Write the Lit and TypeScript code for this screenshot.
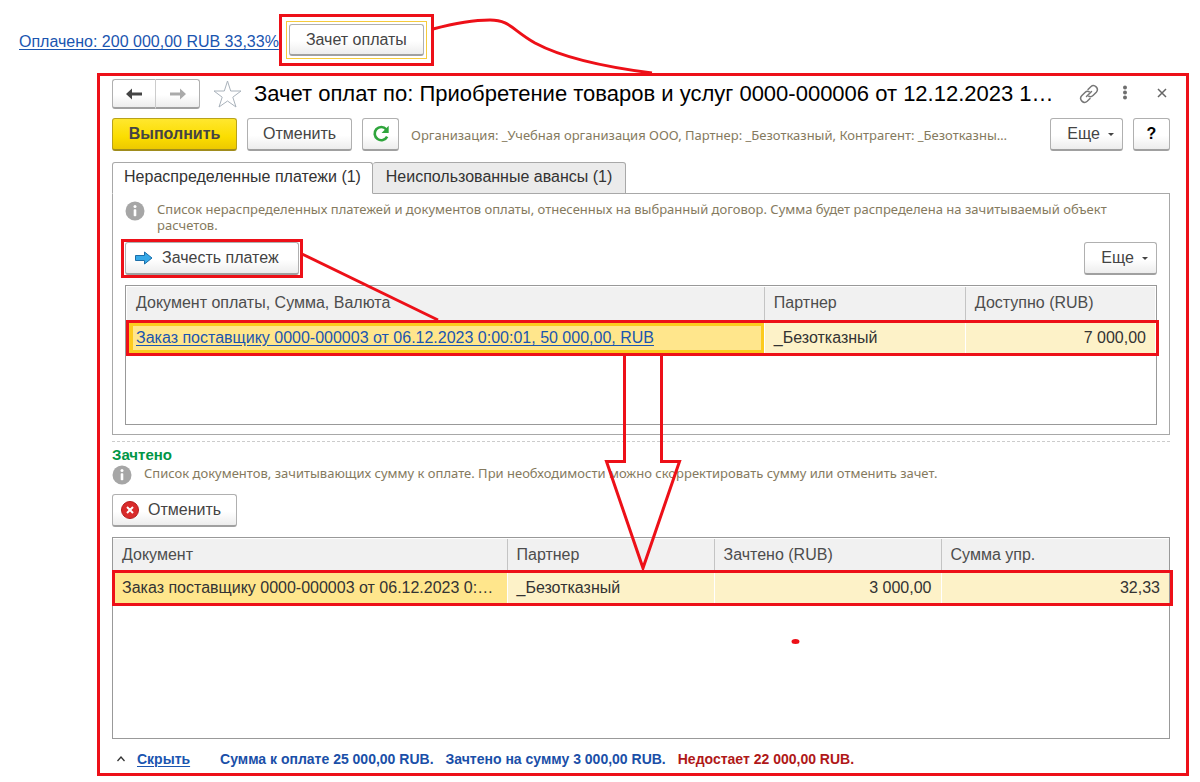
import { LitElement, html, svg, css } from "lit";
import { customElement, state } from "lit/decorators.js";
import { classMap } from "lit/directives/class-map.js";

const infoIcon = html`<svg class="info" viewBox="0 0 20 20" aria-hidden="true">
  <circle cx="10" cy="10" r="9.5" fill="#a6a6a6" />
  <circle cx="10" cy="5.6" r="1.5" fill="#fff" />
  <rect x="8.7" y="8.2" width="2.6" height="7" rx="0.8" fill="#fff" />
</svg>`;

const arrow = (color: string, flip: boolean) => svg`<path
  d=${flip ? "M17 6 L11 0.500 V4.500 H1 V7.500 H11 V11.500 Z" : "M1 6 L7 0.500 V4.500 H17 V7.500 H7 V11.500 Z"}
  fill=${color} />`;

@customElement("app-root")
export class AppRoot extends LitElement {
  @state() private tab = 0;

  static styles = css`
    :host {
      display: block;
      position: relative;
      background: #fff;
      color: #333;
      font: 16px/20px "Liberation Sans", Arial, sans-serif;
      padding: 14px 11px 6px 19px;
      --red: #ed1018;
      --line: #a8a8a8;
    }
    * { box-sizing: border-box; }
    a { color: #1a55b0; text-underline-offset: 2px; }
    button {
      font: inherit;
      color: #444;
      height: 33px;
      padding: 0 16px;
      border: 1px solid #b0b0b0;
      border-bottom: 2px solid #a0a0a0;
      border-radius: 3px;
      background: linear-gradient(#fff 55%, #ededed);
      display: inline-flex;
      align-items: center;
      justify-content: center;
      white-space: nowrap;
      flex: none;
    }
    .paid { display: flex; align-items: center; height: 52px; }
    .paid a { padding-top: 4px; }
    .frame { border: 3px solid var(--red); display: flex; }
    .frame.pay { padding: 4px; }
    .focus { border: 1px solid #f6cb3c; padding: 2px; display: flex; }
    .focus button { width: 135px; height: 32px; }
    .window {
      margin: 7px 0 0 78px;
      border: 3px solid var(--red);
      padding: 3px 16px 4px 12px;
    }
    .title { display: flex; align-items: center; height: 30px; }
    .nav { display: flex; }
    .nav button { height: 30px; width: 44px; padding: 0; }
    .nav .back { border-radius: 3px 0 0 3px; border-right: 1px solid #ccc; }
    .nav .next { border-radius: 0 3px 3px 0; border-left: 0; }
    .nav svg { width: 18px; height: 12px; }
    .star { width: 30px; height: 30px; margin: 0 12px; flex: none; }
    h1 {
      font-size: 22px;
      line-height: 30px;
      font-weight: 400;
      margin: 0;
      color: #000;
      flex: 1;
      min-width: 0;
      white-space: nowrap;
      overflow: hidden;
      text-overflow: ellipsis;
    }
    .tools { display: flex; flex: none; align-items: center; }
    .tools button { border: 0; background: none; padding: 0; height: 24px; width: 36px; }
    .tools button:last-child { width: 38px; margin-right: -11px; }
    .tools svg { width: 22px; height: 22px; }
    .commands { display: flex; align-items: center; gap: 10px; margin-top: 9px; }
    .primary {
      width: 125px;
      font-weight: 700;
      background: linear-gradient(#ffe72e, #fbdd00 60%, #ecc900);
      border-color: #b8a21a;
      border-bottom-color: #a08c1c;
    }
    .cancel { width: 105px; }
    .square { width: 37px; padding: 0; }
    .more { width: 73px; gap: 8px; padding: 0 4px 0 12px; }
    .more::after {
      content: "";
      border: 3px solid transparent;
      border-top-color: #444;
      border-bottom: 0;
    }
    .help { color: #000; font-weight: 700; }
    .note { font: 13px/16px "Noto Sans", sans-serif; color: #857a5e; margin: 0; }
    .commands .note { flex: 1; min-width: 0; white-space: nowrap; overflow: hidden; margin-left: 2px; }
    .tabs { display: flex; margin-top: 11px; }
    .tabs button {
      height: 32px;
      padding: 0 11px 2px;
      color: #333;
      background: #ebebeb;
      border: 1px solid var(--line);
      border-radius: 3px 3px 0 0;
      width: 253px;
    }
    .tabs button + button { border-left: 0; }
    .tabs .wide { width: 261px; }
    .tabs .active { background: #fff; border-bottom-color: #fff; }
    .panel { border: 1px solid var(--line); margin-top: -1px; padding: 7px 12px 9px; }
    .hint { display: flex; }
    .hint .info { margin-right: 12px; }
    .info { width: 20px; height: 20px; flex: none; }
    .bar { display: flex; justify-content: space-between; align-items: center; margin: 6px 0 7px -4px; }
    .bar .frame { padding: 0 1px; }
    .bar .apply { width: 174px; gap: 8px; padding: 0 8px; justify-content: flex-start; }
    .apply svg { width: 20px; height: 16px; }
    .grid { border: 1px solid #999; padding: 1px; min-height: 140px; }
    .grid.tall { min-height: 202px; padding: 1px 0; }
    table { width: 100%; border-collapse: collapse; table-layout: fixed; }
    th, td { padding: 0 9px; font-weight: 400; text-align: left; white-space: nowrap; overflow: hidden; text-overflow: ellipsis; }
    th { height: 33px; padding-bottom: 2px; background: #f1f1f1; color: #4d4d4d; }
    .tall th { height: 31px; padding-bottom: 0; }
    th + th { border-left: 1px solid #c4c4c4; }
    td { height: 36px; background: #fdf2c8; color: #333; }
    td + td { border-left: 1px solid #fff; }
    td.num { text-align: right; }
    td.current { background: #ffe68c; }
    td.focused { box-shadow: inset 0 0 0 6px #fccb1e; background: #ffe68c; padding: 0; }
    td.focused a { display: block; margin: 6px 3px 6px 6px; line-height: 24px; padding-left: 3px; background: #ffe68c; }
    .marked { position: relative; }
    .marked td:last-child::after { content: ""; position: absolute; inset: 0 -4px 0 -1px; border: 3px solid var(--red); pointer-events: none; }
    .c-doc { width: 62%; }
    .c-partner { width: 201px; }
    .c-doc2 { width: 394px; }
    .c-partner2 { width: 207px; }
    .c-sum { width: 227px; }
    .done { border-top: 1px dashed #ccc; margin-top: 6px; padding-top: 3px; }
    h2 { font: 700 15px/20px "Liberation Sans", sans-serif; color: #009646; margin: 0; }
    .undo { width: 125px; gap: 8px; padding: 0 7px; margin: 9px 0 10px; justify-content: flex-start; }
    .undo svg { width: 20px; height: 20px; }
    footer { display: flex; align-items: center; gap: 12px; font-weight: 700; font-size: 14px; line-height: 20px; padding: 10px 5px 0; color: #1a4fa8; }
    footer .fold { width: 8px; height: 6px; }
    footer .hide { margin-right: 18px; }
    footer .lack { color: #b01818; }
    .marks { position: absolute; left: 0; top: 0; width: 1200px; height: 782px; pointer-events: none; fill: none; stroke: var(--red); stroke-width: 3px; }
  `;

  render() {
    return html`
      <div class="paid">
        <a href="#paid">Оплачено: 200 000,00 RUB 33,33%</a>
        <div class="frame pay"><div class="focus"><button>Зачет оплаты</button></div></div>
      </div>
      <main class="window">
        <div class="title">
          <div class="nav">
            <button class="back" aria-label="Назад"><svg viewBox="0 0 18 12">${arrow("#444", false)}</svg></button>
            <button class="next" aria-label="Вперед"><svg viewBox="0 0 18 12">${arrow("#aaa", true)}</svg></button>
          </div>
          <svg class="star" viewBox="0 0 30 30" aria-hidden="true">
            <path d="M15.500 2 L18.700 12 H29 L20.800 18.200 L24 28 L15.500 22 L7 28 L10.200 18.200 L2 12 H12.300 Z" fill="#fff" stroke="#a9b2bb" stroke-width="1" />
          </svg>
          <h1>Зачет оплат по: Приобретение товаров и услуг 0000-000006 от 12.12.2023 1…</h1>
          <div class="tools">
            <button aria-label="Ссылка"><svg viewBox="0 0 22 22" fill="none" stroke="#777" stroke-width="1.5" stroke-linecap="round">
              <path d="M10 6.500 L12.800 3.700 A3.900 3.900 0 0 1 18.300 9.200 L15 12.500 A3.900 3.900 0 0 1 10.800 13.300" />
              <path d="M12 15.500 L9.200 18.300 A3.900 3.900 0 0 1 3.700 12.800 L7 9.500 A3.900 3.900 0 0 1 11.200 8.700" />
              <path d="M8.500 13.500 L13.500 8.500" />
            </svg></button>
            <button aria-label="Меню"><svg viewBox="0 0 22 22" fill="#6e6e6e"><circle cx="11" cy="4.500" r="2" /><circle cx="11" cy="9.500" r="2" /><circle cx="11" cy="14.500" r="2" /></svg></button>
            <button aria-label="Закрыть"><svg viewBox="0 0 22 22" stroke="#666" stroke-width="1.5"><path d="M7 6 L15 14 M15 6 L7 14" /></svg></button>
          </div>
        </div>
        <div class="commands">
          <button class="primary">Выполнить</button>
          <button class="cancel">Отменить</button>
          <button class="square" aria-label="Обновить"><svg width="22" height="22" viewBox="0 0 20 20" fill="none">
            <path d="M14.800 5.700 A6 6 0 1 0 15.600 12.400" stroke="#2fa53c" stroke-width="2.400" />
            <path d="M17 2.500 V9 H10.500 Z" fill="#2fa53c" />
          </svg></button>
          <p class="note">Организация: _Учебная организация ООО, Партнер: _Безотказный, Контрагент: _Безотказны…</p>
          <button class="more">Еще</button>
          <button class="square help">?</button>
        </div>
        <div class="tabs" role="tablist">
          ${["Нераспределенные платежи (1)", "Неиспользованные авансы (1)"].map(
            (label, i) => html`<button role="tab" class=${classMap({ active: this.tab === i, wide: i === 0 })}
              aria-selected=${this.tab === i} @click=${() => (this.tab = i)}>${label}</button>`
          )}
        </div>
        <section class="panel">
          <div class="hint">${infoIcon}
            <p class="note">Список нераспределенных платежей и документов оплаты, отнесенных на выбранный договор. Сумма будет распределена на зачитываемый объект расчетов.</p>
          </div>
          <div class="bar">
            <div class="frame"><button class="apply"><svg viewBox="0 0 20 16"><path d="M1.500 5.500 H10.500 V2 L18 8 L10.500 14 V10.500 H1.500 Z" fill="#36a9e8" stroke="#1c6ea8" /></svg>Зачесть платеж</button></div>
            <button class="more">Еще</button>
          </div>
          <div class="grid">
            <table>
              <colgroup><col class="c-doc" /><col class="c-partner" /><col /></colgroup>
              <thead><tr><th>Документ оплаты, Сумма, Валюта</th><th>Партнер</th><th>Доступно (RUB)</th></tr></thead>
              <tbody><tr class="marked">
                <td class="focused"><a href="#order">Заказ поставщику 0000-000003 от 06.12.2023 0:00:01, 50 000,00, RUB</a></td>
                <td>_Безотказный</td><td class="num">7 000,00</td>
              </tr></tbody>
            </table>
          </div>
        </section>
        <section class="done">
          <h2>Зачтено</h2>
          <div class="hint">${infoIcon}
            <p class="note">Список документов, зачитывающих сумму к оплате. При необходимости можно скорректировать сумму или отменить зачет.</p>
          </div>
          <button class="undo"><svg viewBox="0 0 20 20"><circle cx="10" cy="10" r="8.500" fill="#d92b2b" stroke="#b51d1d" /><path d="M7 7 L13 13 M13 7 L7 13" stroke="#fff" stroke-width="2" /></svg>Отменить</button>
          <div class="grid tall">
            <table>
              <colgroup><col class="c-doc2" /><col class="c-partner2" /><col class="c-sum" /><col /></colgroup>
              <thead><tr><th>Документ</th><th>Партнер</th><th>Зачтено (RUB)</th><th>Сумма упр.</th></tr></thead>
              <tbody><tr class="marked">
                <td class="current">Заказ поставщику 0000-000003 от 06.12.2023 0:…</td>
                <td>_Безотказный</td><td class="num">3 000,00</td><td class="num">32,33</td>
              </tr></tbody>
            </table>
          </div>
        </section>
        <footer>
          <svg class="fold" viewBox="0 0 8 6" fill="none" stroke="#333" stroke-width="1.300"><path d="M0.500 5 L4 1 L7.500 5" /></svg>
          <a class="hide" href="#hide">Скрыть</a>
          <span>Сумма к оплате 25 000,00 RUB.</span>
          <span>Зачтено на сумму 3 000,00 RUB.</span>
          <span class="lack">Недостает 22 000,00 RUB.</span>
        </footer>
      </main>
      <svg class="marks" viewBox="0 0 1200 782" aria-hidden="true">
        <path d="M433 29 C452 24 470 20 490 20 C510 20 512 30 535 43 C563 58 605 67 652 73" />
        <path d="M302 254 L438 320" />
        <path d="M624.500 355 V461.500 H606.500 L643 568 L679.500 461.500 H661.500 V355" />
        <ellipse cx="795.500" cy="641.500" rx="2.500" ry="1" />
      </svg>
    `;
  }
}
